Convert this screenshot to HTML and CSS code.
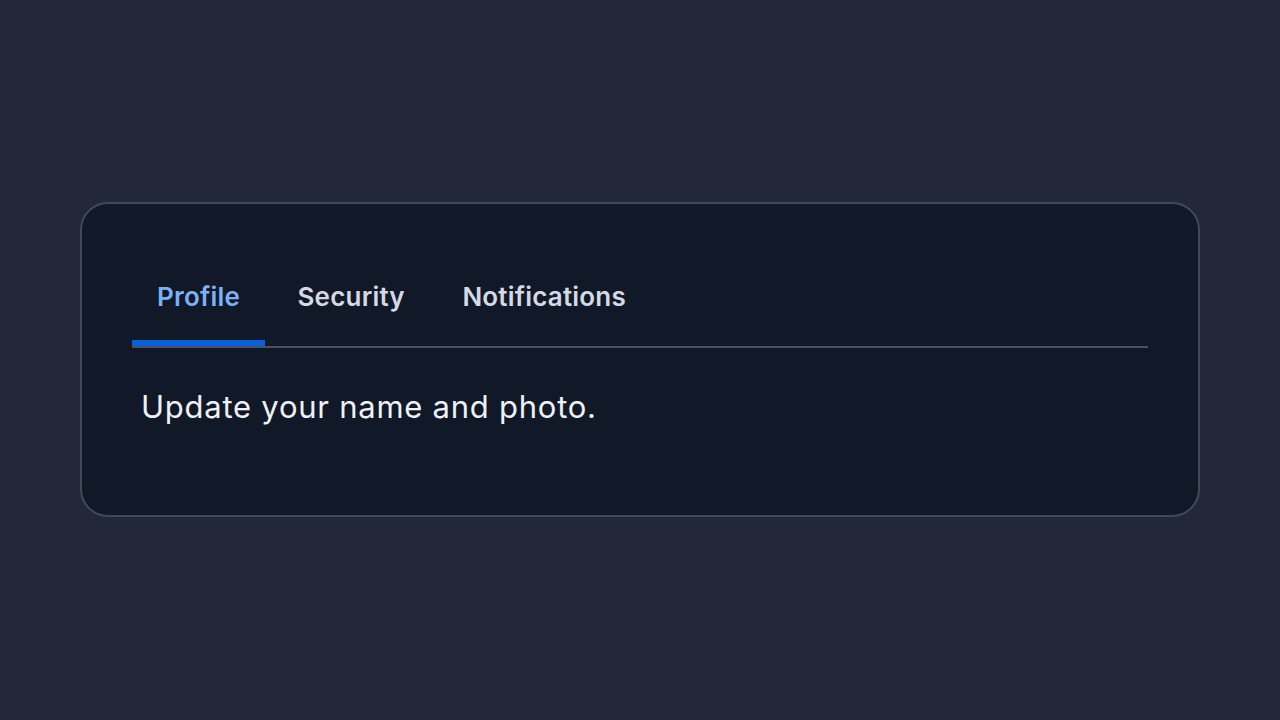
FILE: index.html
```html
<!DOCTYPE html>
<html lang="en">
<head>
<meta charset="utf-8">
<title>Tabs</title>
<link rel="stylesheet" href="styles.css">
</head>
<body>
<main class="page">
  <section class="card">
    <div class="tablist" role="tablist">
      <button class="tab active" role="tab" aria-selected="true">Profile</button>
      <button class="tab" role="tab" aria-selected="false">Security</button>
      <button class="tab" role="tab" aria-selected="false">Notifications</button>
    </div>
    <div class="panel" role="tabpanel">
      <p class="panel-text">Update your name and photo.</p>
    </div>
  </section>
</main>
</body>
</html>
```

FILE: styles.css
```css
* { box-sizing: border-box; }
html, body { margin: 0; padding: 0; }
body {
  background: #222839;
  font-family: Inter, "Noto Sans", sans-serif;
  width: 1280px;
  height: 720px;
  overflow: hidden;
}
.page {
  padding: 202px 80px 0 80px;
}
.card {
  background: #111827;
  border: 2px solid #3f4a5d;
  border-radius: 28px;
  padding: 50px 50px 50px 50px;
  height: 315px;
}
.tablist {
  display: flex;
  gap: 8px;
  border-bottom: 2px solid #465366;
}
.tab {
  appearance: none;
  background: none;
  border: 0;
  margin: 0;
  font-family: inherit;
  font-size: 26px;
  font-weight: 600;
  letter-spacing: 0.2px;
  color: #d4d9e3;
  height: 92px;
  padding: 0 24.5px 6px 25px;
  line-height: 32px;
  position: relative;
  cursor: pointer;
}
.tab.active { color: #7db0f6; }
.tab.active::after {
  content: "";
  position: absolute;
  left: 0;
  right: 0;
  bottom: 0;
  height: 6px;
  background: #0a5fdc;
}
.panel {
  padding: 35px 9px 0 9px;
}
.panel-text {
  margin: 0;
  font-size: 31px;
  line-height: 48px;
  color: #eef1f6;
  letter-spacing: 0.75px;
}
```
